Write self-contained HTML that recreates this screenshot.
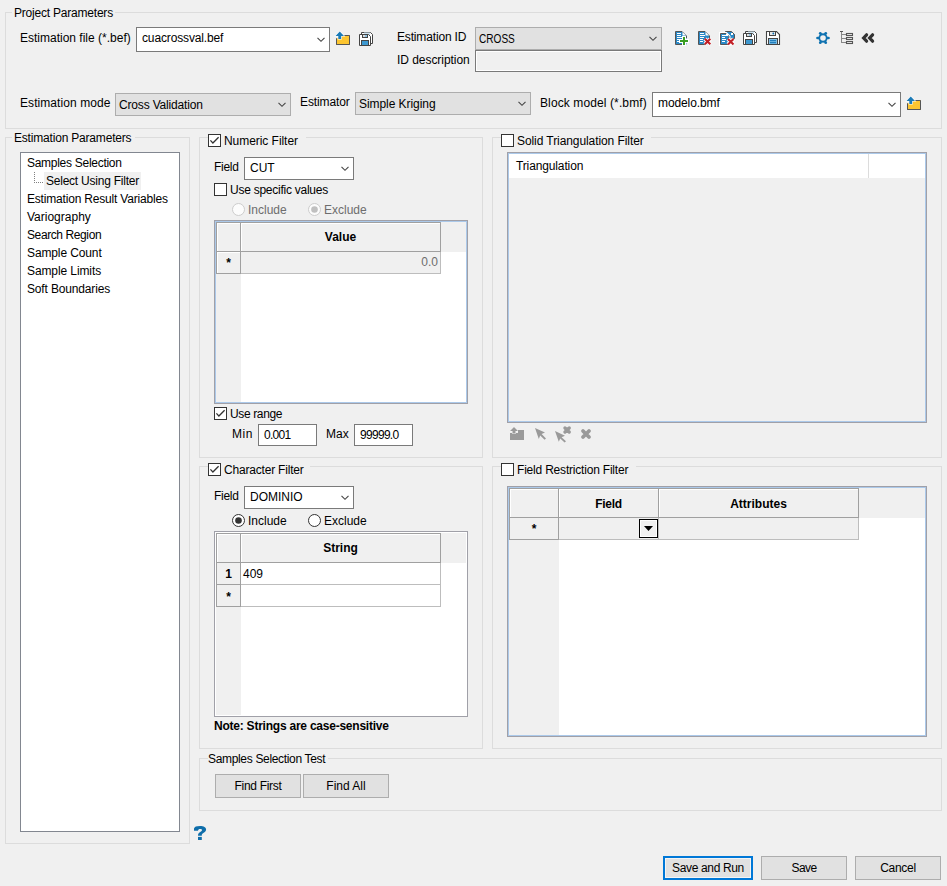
<!DOCTYPE html>
<html><head><meta charset="utf-8">
<style>
html,body{margin:0;padding:0;}
body{width:947px;height:886px;background:#f0f0f0;position:relative;overflow:hidden;font-family:"Liberation Sans",sans-serif;font-size:12px;color:#000;}
.a{position:absolute;box-sizing:border-box;}
.t{position:absolute;white-space:nowrap;line-height:14px;font-size:12px;}
.b{position:absolute;white-space:nowrap;line-height:14px;font-size:12px;font-weight:bold;}
</style></head><body>

<div class="a" style="left:5px;top:12px;width:937px;height:117px;border:1px solid #dcdcdc;"></div>
<div class="a" style="left:12px;top:11px;width:103px;height:3px;background:#f0f0f0;"></div>
<div class="t" style="left:14px;top:6px;letter-spacing:-0.21px;">Project Parameters</div>
<div class="t" style="left:20px;top:31px;letter-spacing:0.0px;">Estimation file (*.bef)</div>
<div class="a" style="left:136px;top:27px;width:194px;height:25px;border:1px solid #7a7a7a;background:#fff;"></div>
<div class="t" style="left:142px;top:31px;letter-spacing:-0.14px;">cuacrossval.bef</div>
<svg class="a" style="left:317px;top:37px" width="10" height="6"><polyline points="0.5,0.8 4,4.3 7.5,0.8" fill="none" stroke="#444" stroke-width="1.1"/></svg>

<svg class="a" style="left:334px;top:30px" width="18" height="17" viewBox="0 0 18 17">
<path d="M2.5,8.5 V14.5 H15.5 V5.5 H8.5" fill="#fcc530" stroke="#555" stroke-width="1"/>
<path d="M2.5,8.5 H9 L15.5,5.5 V14.5 H2.5 Z" fill="#fcc530" stroke="none"/>
<path d="M2.5,8.5 V14.5 H15.5 V5.5" fill="none" stroke="#555" stroke-width="1"/>
<polygon points="1.5,6 5.75,1.5 10,6 7.2,6 7.2,9 4.3,9 4.3,6" fill="#1b7ab6" stroke="#fff" stroke-width="1.2" paint-order="stroke"/>
</svg>
<svg class="a" style="left:358px;top:31px" width="17" height="17" viewBox="0 0 17 17">
<path d="M3.5,1.5 H12.5 L14.5,3.5 V12.5 H3.5 Z" fill="#fff" stroke="#444"/>
<rect x="6" y="1.5" width="6" height="2.5" fill="#cfe3f0"/>
<path d="M1.5,3.5 H10.5 L12.5,5.5 V14.5 H1.5 Z" fill="#fff" stroke="#444"/>
<rect x="4.5" y="3.5" width="5" height="3" fill="#ddd" stroke="#444"/>
<rect x="7" y="4" width="2" height="2" fill="#8ec2e3"/>
<rect x="3.5" y="9.5" width="7" height="5" fill="#3d98d0" stroke="#444"/>
</svg>

<div class="t" style="left:397px;top:30px;letter-spacing:-0.16px;">Estimation ID</div>
<div class="a" style="left:475px;top:27px;width:187px;height:23px;border:1px solid #adadad;background:#e1e1e1;"></div>
<div class="t" style="left:479px;top:32px;"><span style="display:inline-block;transform:scaleX(0.84);transform-origin:0 0">CROSS</span></div>
<svg class="a" style="left:649px;top:36px" width="10" height="6"><polyline points="0.5,0.8 4,4.3 7.5,0.8" fill="none" stroke="#444" stroke-width="1.1"/></svg>
<div class="t" style="left:397px;top:53px;letter-spacing:-0.05px;">ID description</div>
<div class="a" style="left:475px;top:50px;width:187px;height:22px;border:1px solid #7a7a7a;"></div>
<div class="a" style="left:476px;top:51px;width:185px;height:20px;border:1px solid #fff;"></div>

<svg class="a" style="left:673px;top:29px" width="18" height="18" viewBox="0 0 18 18">
<path d="M2.5,2.5 H9 L13.5,7 V15.5 H2.5 Z" fill="#2a88c6"/><path d="M9,15.5 H2.5 V2.5 H9 L13.5,7 V9" fill="none" stroke="#555"/>
<path d="M9.5,3 V6.5 H13 Z" fill="#fff"/>
<rect x="4" y="4" width="4" height="1" fill="#fff"/>
<rect x="4" y="6" width="4" height="1" fill="#fff"/>
<rect x="4" y="8" width="5" height="1" fill="#fff"/>
<rect x="4" y="10" width="2" height="1" fill="#fff"/>
<rect x="4" y="12" width="2" height="1" fill="#fff"/>
<path d="M10,8 H12 V11 H15 V13 H12 V16 H10 V13 H7 V11 H10 Z" fill="#3a9d23" stroke="#fff" stroke-width="2" paint-order="stroke"/>
</svg>
<svg class="a" style="left:696px;top:29px" width="18" height="18" viewBox="0 0 18 18">
<path d="M2.5,2.5 H9 L13.5,7 V15.5 H2.5 Z" fill="#2a88c6"/><path d="M9,15.5 H2.5 V2.5 H9 L13.5,7 V9" fill="none" stroke="#555"/>
<path d="M9.5,3 V6.5 H13 Z" fill="#fff"/>
<rect x="4" y="4" width="4" height="1" fill="#fff"/>
<rect x="4" y="6" width="5" height="1" fill="#fff"/>
<rect x="4" y="8" width="4" height="1" fill="#fff"/>
<rect x="4" y="10" width="3" height="1" fill="#fff"/>
<rect x="4" y="12" width="3" height="1" fill="#fff"/>
<path d="M8.8,9.8 L14.3,15.3 M14.3,9.8 L8.8,15.3" stroke="#fff" stroke-width="4"/>
<path d="M8.8,9.8 L14.3,15.3 M14.3,9.8 L8.8,15.3" stroke="#c21f26" stroke-width="2.1"/>
</svg>
<svg class="a" style="left:718px;top:28px" width="19" height="19" viewBox="0 0 19 19">
<path d="M7.5,3.5 H13.5 L16.5,6.5 V10.5 H7.5 Z" fill="#2a88c6" stroke="#555"/>
<rect x="13" y="5" width="2" height="2" fill="#fff"/>
<path d="M2.5,5.5 H8 L11,8.5 V16.5 H2.5 Z" fill="#2a88c6" stroke="#fff" stroke-width="3" paint-order="stroke"/>
<path d="M2.5,5.5 H8 L11,8.5 V16.5 H2.5 Z" fill="none" stroke="#555"/>
<rect x="8" y="6" width="2" height="2" fill="#fff"/>
<rect x="4" y="7" width="4" height="1" fill="#fff"/>
<rect x="4" y="9" width="3" height="1" fill="#fff"/>
<rect x="4" y="11" width="4" height="1" fill="#fff"/>
<rect x="4" y="13" width="3" height="1" fill="#fff"/>
<path d="M10,11 L15.5,16.5 M15.5,11 L10,16.5" stroke="#fff" stroke-width="4"/>
<path d="M10,11 L15.5,16.5 M15.5,11 L10,16.5" stroke="#c21f26" stroke-width="2.1"/>
</svg>
<svg class="a" style="left:742px;top:30px" width="17" height="17" viewBox="0 0 17 17">
<path d="M3.5,1.5 H12.5 L14.5,3.5 V12.5 H3.5 Z" fill="#fff" stroke="#444"/>
<rect x="6" y="1.5" width="6" height="2.5" fill="#cfe3f0"/>
<path d="M1.5,3.5 H10.5 L12.5,5.5 V14.5 H1.5 Z" fill="#fff" stroke="#444"/>
<rect x="4.5" y="3.5" width="5" height="3" fill="#ddd" stroke="#444"/>
<rect x="7" y="4" width="2" height="2" fill="#8ec2e3"/>
<rect x="3.5" y="9.5" width="7" height="5" fill="#3d98d0" stroke="#444"/>
</svg>
<svg class="a" style="left:765px;top:30px" width="17" height="17" viewBox="0 0 17 17">
<path d="M1.5,1.5 H11.5 L14.5,4.5 V14.5 H1.5 Z" fill="#fff" stroke="#444" stroke-width="1.1"/>
<rect x="4.5" y="1.5" width="6" height="4" fill="#e8e8e8" stroke="#444"/>
<circle cx="8.3" cy="3.5" r="0.9" fill="#0a6db0"/>
<rect x="3.5" y="8.5" width="9" height="6" fill="#7ec0e8" stroke="#444"/>
<rect x="5" y="10.2" width="6" height="1" fill="#0a6db0"/>
<rect x="5" y="12.2" width="6" height="1" fill="#0a6db0"/>
</svg>
<svg class="a" style="left:815px;top:30px" width="16" height="16" viewBox="0 0 16 16">
<g transform="translate(8,8)" fill="#0f72b0">
<circle r="4.7"/>
<circle cx="5.5" cy="0" r="1.35"/><circle cx="-5.5" cy="0" r="1.35"/><circle cx="2.75" cy="-4.76" r="1.35"/><circle cx="-2.75" cy="-4.76" r="1.35"/><circle cx="2.75" cy="4.76" r="1.35"/><circle cx="-2.75" cy="4.76" r="1.35"/>
<path d="M0,0 L5.5,0 M0,0 L-5.5,0 M0,0 L2.75,-4.76 M0,0 L-2.75,-4.76 M0,0 L2.75,4.76 M0,0 L-2.75,4.76" stroke="#0f72b0" stroke-width="2.2"/>
<circle r="2.8" fill="#f0f0f0"/>
</g>
</svg>
<svg class="a" style="left:838px;top:30px" width="17" height="16" viewBox="0 0 17 16">
<rect x="2" y="1" width="3" height="1" fill="#555"/>
<rect x="3" y="2" width="1" height="11" fill="#888"/>
<rect x="4" y="4" width="4" height="1" fill="#888"/>
<rect x="4" y="8" width="4" height="1" fill="#888"/>
<rect x="4" y="12" width="4" height="1" fill="#888"/>
<rect x="8.5" y="3.5" width="6" height="2" fill="#eee" stroke="#555" stroke-width="1.1"/>
<rect x="8.5" y="7.5" width="6" height="2" fill="#eee" stroke="#555" stroke-width="1.1"/>
<rect x="8.5" y="11.5" width="6" height="2" fill="#eee" stroke="#555" stroke-width="1.1"/>
</svg>
<svg class="a" style="left:858px;top:29px" width="20" height="18" viewBox="0 0 20 18">
<polyline points="8.6,5.8 5.6,9 8.6,12.2" fill="none" stroke="#333" stroke-width="3.2" stroke-linecap="round" stroke-linejoin="miter"/>
<polyline points="14.6,5.8 11.6,9 14.6,12.2" fill="none" stroke="#333" stroke-width="3.2" stroke-linecap="round" stroke-linejoin="miter"/>
</svg>

<div class="t" style="left:20px;top:96px;letter-spacing:0.07px;">Estimation mode</div>
<div class="a" style="left:115px;top:93px;width:176px;height:23px;border:1px solid #adadad;background:#e1e1e1;"></div>
<div class="t" style="left:119px;top:98px;letter-spacing:-0.17px;">Cross Validation</div>
<svg class="a" style="left:278px;top:102px" width="10" height="6"><polyline points="0.5,0.8 4,4.3 7.5,0.8" fill="none" stroke="#444" stroke-width="1.1"/></svg>
<div class="t" style="left:300px;top:95px;letter-spacing:-0.12px;">Estimator</div>
<div class="a" style="left:355px;top:92px;width:176px;height:23px;border:1px solid #adadad;background:#e1e1e1;"></div>
<div class="t" style="left:359px;top:97px;letter-spacing:-0.06px;">Simple Kriging</div>
<svg class="a" style="left:518px;top:101px" width="10" height="6"><polyline points="0.5,0.8 4,4.3 7.5,0.8" fill="none" stroke="#444" stroke-width="1.1"/></svg>
<div class="t" style="left:540px;top:96px;letter-spacing:0.11px;">Block model (*.bmf)</div>
<div class="a" style="left:652px;top:92px;width:249px;height:25px;border:1px solid #7a7a7a;background:#fff;"></div>
<div class="t" style="left:658px;top:96px;letter-spacing:-0.1px;">modelo.bmf</div>
<svg class="a" style="left:888px;top:102px" width="10" height="6"><polyline points="0.5,0.8 4,4.3 7.5,0.8" fill="none" stroke="#444" stroke-width="1.1"/></svg>

<svg class="a" style="left:905px;top:95px" width="18" height="17" viewBox="0 0 18 17">
<path d="M2.5,8.5 V14.5 H15.5 V5.5 H8.5" fill="#fcc530" stroke="#555" stroke-width="1"/>
<path d="M2.5,8.5 H9 L15.5,5.5 V14.5 H2.5 Z" fill="#fcc530" stroke="none"/>
<path d="M2.5,8.5 V14.5 H15.5 V5.5" fill="none" stroke="#555" stroke-width="1"/>
<polygon points="1.5,6 5.75,1.5 10,6 7.2,6 7.2,9 4.3,9 4.3,6" fill="#1b7ab6" stroke="#fff" stroke-width="1.2" paint-order="stroke"/>
</svg>

<div class="a" style="left:5px;top:137px;width:185px;height:707px;border:1px solid #dcdcdc;"></div>
<div class="a" style="left:12px;top:136px;width:123px;height:3px;background:#f0f0f0;"></div>
<div class="t" style="left:14px;top:131px;letter-spacing:-0.19px;">Estimation Parameters</div>
<div class="a" style="left:20px;top:152px;width:160px;height:680px;border:1px solid #828790;background:#fff;"></div>
<div class="a" style="left:44px;top:172px;width:97px;height:18px;background:#f0f0f0;"></div>

<svg class="a" style="left:34px;top:172px" width="10" height="11" viewBox="0 0 10 11">
<g fill="#808080"><rect x="0" y="0" width="1" height="1"/><rect x="0" y="2" width="1" height="1"/><rect x="0" y="4" width="1" height="1"/><rect x="0" y="6" width="1" height="1"/><rect x="0" y="8" width="1" height="1"/><rect x="0" y="10" width="1" height="1"/><rect x="2" y="10" width="1" height="1"/><rect x="4" y="10" width="1" height="1"/><rect x="6" y="10" width="1" height="1"/><rect x="8" y="10" width="1" height="1"/></g>
</svg>

<div class="t" style="left:27px;top:156px;letter-spacing:-0.28px;">Samples Selection</div>
<div class="t" style="left:46px;top:174px;letter-spacing:-0.23px;">Select Using Filter</div>
<div class="t" style="left:27px;top:192px;letter-spacing:-0.19px;">Estimation Result Variables</div>
<div class="t" style="left:27px;top:210px;letter-spacing:0px;">Variography</div>
<div class="t" style="left:27px;top:228px;letter-spacing:-0.4px;">Search Region</div>
<div class="t" style="left:27px;top:246px;letter-spacing:-0.12px;">Sample Count</div>
<div class="t" style="left:27px;top:264px;letter-spacing:-0.1px;">Sample Limits</div>
<div class="t" style="left:27px;top:282px;letter-spacing:-0.16px;">Soft Boundaries</div>
<div class="a" style="left:199px;top:137px;width:284px;height:321px;border:1px solid #dcdcdc;"></div>
<div class="a" style="left:208px;top:136px;width:98px;height:3px;background:#f0f0f0;"></div>
<svg class="a" style="left:208px;top:134px" width="13" height="13"><rect x="0.5" y="0.5" width="12" height="12" fill="#fff" stroke="#333"/><polyline points="2.4,6.4 4.9,9 10.6,3.3" fill="none" stroke="#333" stroke-width="1.3"/></svg>
<div class="t" style="left:224px;top:134px;letter-spacing:-0.05px;">Numeric Filter</div>
<div class="t" style="left:214px;top:160px;letter-spacing:-0.3px;">Field</div>
<div class="a" style="left:244px;top:157px;width:110px;height:23px;border:1px solid #7a7a7a;background:#fff;"></div>
<div class="t" style="left:250px;top:161px;">CUT</div>
<svg class="a" style="left:341px;top:166px" width="10" height="6"><polyline points="0.5,0.8 4,4.3 7.5,0.8" fill="none" stroke="#444" stroke-width="1.1"/></svg>
<svg class="a" style="left:214px;top:183px" width="13" height="13"><rect x="0.5" y="0.5" width="12" height="12" fill="#fff" stroke="#333"/></svg>
<div class="t" style="left:230px;top:183px;letter-spacing:-0.25px;">Use specific values</div>
<svg class="a" style="left:232px;top:203px" width="13" height="13"><circle cx="6.5" cy="6.5" r="6" fill="#fcfcfc" stroke="#cccccc"/></svg>
<div class="t" style="left:248px;top:203px;color:#6d6d6d;">Include</div>
<svg class="a" style="left:308px;top:203px" width="13" height="13"><circle cx="6.5" cy="6.5" r="6" fill="#fcfcfc" stroke="#cccccc"/><circle cx="6.5" cy="6.5" r="3.3" fill="#c0c0c0"/></svg>
<div class="t" style="left:324px;top:203px;color:#6d6d6d;">Exclude</div>
<div class="a" style="left:214px;top:220px;width:254px;height:184px;border:1px solid #a0a0a8;background:#fff;"></div>
<div class="a" style="left:215px;top:221px;width:252px;height:182px;border:1px solid #abc9ea;"></div>
<div class="a" style="left:216px;top:222px;width:250px;height:30px;background:#f0f0f0;"></div>
<div class="a" style="left:216px;top:222px;width:25px;height:180px;background:#f0f0f0;"></div>
<div class="a" style="left:241px;top:252px;width:200px;height:22px;background:#f0f0f0;"></div>
<div class="a" style="left:216px;top:222px;width:225px;height:1px;background:#a0a0a0;"></div>
<div class="a" style="left:216px;top:251px;width:225px;height:1px;background:#a0a0a0;"></div>
<div class="a" style="left:216px;top:273px;width:25px;height:1px;background:#a0a0a0;"></div>
<div class="a" style="left:241px;top:273px;width:200px;height:1px;background:#bdbdbd;"></div>
<div class="a" style="left:216px;top:222px;width:1px;height:52px;background:#a0a0a0;"></div>
<div class="a" style="left:240px;top:222px;width:1px;height:52px;background:#a0a0a0;"></div>
<div class="a" style="left:440px;top:222px;width:1px;height:30px;background:#a0a0a0;"></div>
<div class="a" style="left:440px;top:252px;width:1px;height:22px;background:#bdbdbd;"></div>
<div class="a" style="left:217px;top:223px;width:23px;height:1px;background:#fff;"></div>
<div class="a" style="left:241px;top:223px;width:199px;height:1px;background:#fff;"></div>
<div class="a" style="left:217px;top:223px;width:1px;height:28px;background:#fff;"></div>
<div class="a" style="left:241px;top:223px;width:1px;height:28px;background:#fff;"></div>
<div class="a" style="left:217px;top:252px;width:23px;height:1px;background:#fff;"></div>
<div class="a" style="left:217px;top:252px;width:1px;height:21px;background:#fff;"></div>
<div class="b" style="left:241px;top:230px;width:199px;text-align:center;">Value</div>
<div class="b" style="left:217px;top:256px;width:23px;text-align:center;">*</div>
<div class="t" style="left:241px;top:255px;width:197px;text-align:right;color:#6d6d6d;">0.0</div>
<svg class="a" style="left:214px;top:407px" width="13" height="13"><rect x="0.5" y="0.5" width="12" height="12" fill="#fff" stroke="#333"/><polyline points="2.4,6.4 4.9,9 10.6,3.3" fill="none" stroke="#333" stroke-width="1.3"/></svg>
<div class="t" style="left:230px;top:407px;letter-spacing:-0.36px;">Use range</div>
<div class="t" style="left:232px;top:427px;letter-spacing:0.5px;">Min</div>
<div class="a" style="left:258px;top:424px;width:59px;height:22px;border:1px solid #7a7a7a;background:#fff;"></div>
<div class="t" style="left:264px;top:428px;letter-spacing:-0.7px;">0.001</div>
<div class="t" style="left:326px;top:427px;">Max</div>
<div class="a" style="left:354px;top:424px;width:59px;height:22px;border:1px solid #7a7a7a;background:#fff;"></div>
<div class="t" style="left:360px;top:428px;letter-spacing:-0.7px;">99999.0</div>
<div class="a" style="left:492px;top:137px;width:450px;height:321px;border:1px solid #dcdcdc;"></div>
<div class="a" style="left:501px;top:136px;width:150px;height:3px;background:#f0f0f0;"></div>
<svg class="a" style="left:501px;top:134px" width="13" height="13"><rect x="0.5" y="0.5" width="12" height="12" fill="#fff" stroke="#333"/></svg>
<div class="t" style="left:517px;top:134px;letter-spacing:-0.08px;">Solid Triangulation Filter</div>
<div class="a" style="left:507px;top:152px;width:420px;height:271px;border:1px solid #a0a0a8;background:#f0f0f0;"></div>
<div class="a" style="left:508px;top:153px;width:418px;height:269px;border:1px solid #abc9ea;"></div>
<div class="a" style="left:509px;top:154px;width:416px;height:24px;background:#fff;"></div>
<div class="a" style="left:868px;top:154px;width:1px;height:24px;background:#dcdcdc;"></div>
<div class="t" style="left:516px;top:159px;letter-spacing:-0.13px;">Triangulation</div>

<svg class="a" style="left:509px;top:426px" width="16" height="15" viewBox="0 0 16 15">
<rect x="1" y="7" width="14" height="7" fill="#9a9a9a"/>
<rect x="9" y="4" width="6" height="4" fill="#9a9a9a"/>
<path d="M1,5 L5,1 L9,5 H6.5 V7.5 H3.5 V5 Z" fill="#9a9a9a" stroke="#f8f8f8" stroke-width="1" paint-order="stroke"/>
</svg>
<svg class="a" style="left:534px;top:427px" width="14" height="14" viewBox="0 0 14 14">
<path d="M1,1 L11,5.6 L7.6,7 L12,11.4 L10.6,12.8 L6.2,8.4 L4.8,12 Z" fill="#9a9a9a"/>
</svg>
<svg class="a" style="left:554px;top:425px" width="19" height="18" viewBox="0 0 19 18">
<path d="M1,6 L11,10.8 L7.6,12.2 L12,16.2 L10.6,17.6 L6.2,13.4 L4.8,16.8 Z" fill="#9a9a9a" stroke="#f0f0f0" stroke-width="0.8" paint-order="stroke"/>
<path d="M11,3 L15.2,7 M15.2,3 L11,7" stroke="#9a9a9a" stroke-width="3.4" stroke-linecap="round"/>
</svg>
<svg class="a" style="left:579px;top:427px" width="14" height="14" viewBox="0 0 14 14">
<path d="M4,4 L10,10 M10,4 L4,10" stroke="#9a9a9a" stroke-width="3.8" stroke-linecap="round"/>
</svg>

<div class="a" style="left:199px;top:466px;width:284px;height:283px;border:1px solid #dcdcdc;"></div>
<div class="a" style="left:208px;top:465px;width:102px;height:3px;background:#f0f0f0;"></div>
<svg class="a" style="left:208px;top:463px" width="13" height="13"><rect x="0.5" y="0.5" width="12" height="12" fill="#fff" stroke="#333"/><polyline points="2.4,6.4 4.9,9 10.6,3.3" fill="none" stroke="#333" stroke-width="1.3"/></svg>
<div class="t" style="left:224px;top:463px;letter-spacing:-0.19px;">Character Filter</div>
<div class="t" style="left:214px;top:489px;letter-spacing:-0.3px;">Field</div>
<div class="a" style="left:244px;top:486px;width:110px;height:23px;border:1px solid #7a7a7a;background:#fff;"></div>
<div class="t" style="left:250px;top:490px;">DOMINIO</div>
<svg class="a" style="left:341px;top:495px" width="10" height="6"><polyline points="0.5,0.8 4,4.3 7.5,0.8" fill="none" stroke="#444" stroke-width="1.1"/></svg>
<svg class="a" style="left:232px;top:514px" width="13" height="13"><circle cx="6.5" cy="6.5" r="6" fill="#fff" stroke="#333"/><circle cx="6.5" cy="6.5" r="3.3" fill="#333"/></svg>
<div class="t" style="left:248px;top:514px;">Include</div>
<svg class="a" style="left:308px;top:514px" width="13" height="13"><circle cx="6.5" cy="6.5" r="6" fill="#fff" stroke="#333"/></svg>
<div class="t" style="left:324px;top:514px;">Exclude</div>
<div class="a" style="left:214px;top:531px;width:254px;height:186px;border:1px solid #a0a0a8;background:#fff;"></div>
<div class="a" style="left:215px;top:532px;width:252px;height:184px;border:1px solid #fff;"></div>
<div class="a" style="left:216px;top:533px;width:250px;height:30px;background:#f0f0f0;"></div>
<div class="a" style="left:216px;top:533px;width:25px;height:182px;background:#f0f0f0;"></div>
<div class="a" style="left:216px;top:533px;width:225px;height:1px;background:#a0a0a0;"></div>
<div class="a" style="left:216px;top:562px;width:225px;height:1px;background:#a0a0a0;"></div>
<div class="a" style="left:216px;top:584px;width:25px;height:1px;background:#a0a0a0;"></div>
<div class="a" style="left:216px;top:606px;width:25px;height:1px;background:#a0a0a0;"></div>
<div class="a" style="left:241px;top:584px;width:200px;height:1px;background:#bdbdbd;"></div>
<div class="a" style="left:241px;top:606px;width:200px;height:1px;background:#bdbdbd;"></div>
<div class="a" style="left:216px;top:533px;width:1px;height:74px;background:#a0a0a0;"></div>
<div class="a" style="left:240px;top:533px;width:1px;height:74px;background:#a0a0a0;"></div>
<div class="a" style="left:440px;top:533px;width:1px;height:30px;background:#a0a0a0;"></div>
<div class="a" style="left:440px;top:563px;width:1px;height:44px;background:#bdbdbd;"></div>
<div class="a" style="left:217px;top:534px;width:23px;height:1px;background:#fff;"></div>
<div class="a" style="left:241px;top:534px;width:199px;height:1px;background:#fff;"></div>
<div class="a" style="left:217px;top:534px;width:1px;height:28px;background:#fff;"></div>
<div class="a" style="left:241px;top:534px;width:1px;height:28px;background:#fff;"></div>
<div class="b" style="left:241px;top:541px;width:199px;text-align:center;">String</div>
<div class="b" style="left:217px;top:567px;width:23px;text-align:center;">1</div>
<div class="t" style="left:243px;top:567px;">409</div>
<div class="b" style="left:217px;top:590px;width:23px;text-align:center;">*</div>
<div class="b" style="left:214px;top:719px;letter-spacing:-0.23px;">Note: Strings are case-sensitive</div>
<div class="a" style="left:492px;top:466px;width:450px;height:283px;border:1px solid #dcdcdc;"></div>
<div class="a" style="left:501px;top:465px;width:135px;height:3px;background:#f0f0f0;"></div>
<svg class="a" style="left:501px;top:463px" width="13" height="13"><rect x="0.5" y="0.5" width="12" height="12" fill="#fff" stroke="#333"/></svg>
<div class="t" style="left:517px;top:463px;letter-spacing:-0.2px;">Field Restriction Filter</div>
<div class="a" style="left:507px;top:486px;width:420px;height:251px;border:1px solid #a0a0a8;background:#fff;"></div>
<div class="a" style="left:508px;top:487px;width:418px;height:249px;border:1px solid #abc9ea;"></div>
<div class="a" style="left:509px;top:488px;width:416px;height:30px;background:#f0f0f0;"></div>
<div class="a" style="left:509px;top:488px;width:50px;height:247px;background:#f0f0f0;"></div>
<div class="a" style="left:559px;top:518px;width:300px;height:22px;background:#f0f0f0;"></div>
<div class="a" style="left:509px;top:488px;width:350px;height:1px;background:#a0a0a0;"></div>
<div class="a" style="left:509px;top:517px;width:350px;height:1px;background:#a0a0a0;"></div>
<div class="a" style="left:509px;top:539px;width:50px;height:1px;background:#a0a0a0;"></div>
<div class="a" style="left:559px;top:539px;width:300px;height:1px;background:#bdbdbd;"></div>
<div class="a" style="left:509px;top:488px;width:1px;height:52px;background:#a0a0a0;"></div>
<div class="a" style="left:558px;top:488px;width:1px;height:52px;background:#a0a0a0;"></div>
<div class="a" style="left:658px;top:488px;width:1px;height:30px;background:#a0a0a0;"></div>
<div class="a" style="left:858px;top:488px;width:1px;height:30px;background:#a0a0a0;"></div>
<div class="a" style="left:658px;top:518px;width:1px;height:22px;background:#bdbdbd;"></div>
<div class="a" style="left:858px;top:518px;width:1px;height:22px;background:#bdbdbd;"></div>
<div class="a" style="left:510px;top:489px;width:48px;height:1px;background:#fff;"></div>
<div class="a" style="left:559px;top:489px;width:99px;height:1px;background:#fff;"></div>
<div class="a" style="left:659px;top:489px;width:199px;height:1px;background:#fff;"></div>
<div class="a" style="left:510px;top:489px;width:1px;height:28px;background:#fff;"></div>
<div class="a" style="left:559px;top:489px;width:1px;height:28px;background:#fff;"></div>
<div class="a" style="left:659px;top:489px;width:1px;height:28px;background:#fff;"></div>
<div class="b" style="left:559px;top:497px;width:99px;text-align:center;letter-spacing:-0.3px;">Field</div>
<div class="b" style="left:659px;top:497px;width:199px;text-align:center;">Attributes</div>
<div class="b" style="left:510px;top:522px;width:48px;text-align:center;">*</div>
<svg class="a" style="left:639px;top:519px" width="19" height="19"><rect x="0.5" y="0.5" width="18" height="18" fill="#f0f0f0" stroke="#000"/><rect x="1.5" y="1.5" width="16" height="16" fill="none" stroke="#fff"/><polygon points="5,7 14,7 9.5,12" fill="#000"/></svg>
<div class="a" style="left:199px;top:758px;width:743px;height:53px;border:1px solid #dcdcdc;"></div>
<div class="a" style="left:208px;top:757px;width:120px;height:3px;background:#f0f0f0;"></div>
<div class="t" style="left:208px;top:752px;letter-spacing:-0.33px;">Samples Selection Test</div>
<div class="a" style="left:215px;top:774px;width:86px;height:24px;border:1px solid #adadad;background:#e1e1e1;"></div>
<div class="t" style="left:215px;top:779px;width:86px;text-align:center;letter-spacing:-0.3px;">Find First</div>
<div class="a" style="left:303px;top:774px;width:86px;height:24px;border:1px solid #adadad;background:#e1e1e1;"></div>
<div class="t" style="left:303px;top:779px;width:86px;text-align:center;">Find All</div>

<svg class="a" style="left:190px;top:822px" width="20" height="22" viewBox="0 0 20 22">
<path d="M4,6.6 C4.4,4.8 6.4,4 10,4 C13.8,4 16.1,5.2 16.1,7.6 C16.1,9.6 14.5,10.5 13,11.3 C12,11.9 11.8,12.5 11.8,13.7 H8 C8,12 8.6,11 10.2,10.1 C11.5,9.4 12,8.9 12,8.1 C12,7.5 11.3,7.1 10,7.1 C8.8,7.1 8.2,7.7 8,8.7 H4 Z" fill="#0f6eaa"/>
<rect x="8" y="14.9" width="3.8" height="3.1" fill="#0f6eaa"/>
</svg>

<div class="a" style="left:663px;top:856px;width:90px;height:24px;border:2px solid #0078d7;background:#e1e1e1;"></div>
<div class="a" style="left:665px;top:858px;width:86px;height:20px;border:1px solid #f4f4f4;"></div>
<div class="t" style="left:663px;top:861px;width:90px;text-align:center;letter-spacing:-0.35px;">Save and Run</div>
<div class="a" style="left:761px;top:856px;width:86px;height:24px;border:1px solid #adadad;background:#e1e1e1;"></div>
<div class="t" style="left:761px;top:861px;width:86px;text-align:center;letter-spacing:-0.6px;">Save</div>
<div class="a" style="left:855px;top:856px;width:86px;height:24px;border:1px solid #adadad;background:#e1e1e1;"></div>
<div class="t" style="left:855px;top:861px;width:86px;text-align:center;letter-spacing:-0.3px;">Cancel</div>
</body></html>
